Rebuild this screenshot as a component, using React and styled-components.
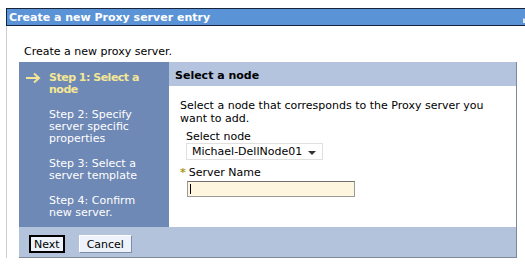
import styled, { createGlobalStyle } from 'styled-components';

const GlobalStyle = createGlobalStyle`
    body {
        margin: 0;
        background: #ffffff;
        font-family: "DejaVu Sans", Verdana, sans-serif;
        font-size: 11px;
        color: #000000;
        overflow: hidden;
    }
`;

const Window = styled.div`
    margin: 8px 0 0 6px;
    width: 540px;
`;

const TitleBar = styled.div`
    display: flex;
    align-items: center;
    justify-content: space-between;
    height: 16px;
    padding-left: 2px;
    background: #5a93d6;
    border: 1px solid #16233a;
    color: #ffffff;
    font-weight: bold;
    font-size: 11px;
`;

const Minimize = styled.span`
    width: 10px;
    height: 4px;
    margin: 6px 12px 0 0;
    background: #dfe9f6;
    border-top: 1px solid #9bb8de;
`;

const Body = styled.div`
    height: 232px;
    border-left: 1px solid #cfcfcf;
    padding: 19px 0 0 12px;
    box-sizing: border-box;
`;

const Intro = styled.p`
    margin: 0 0 4px 5px;
    line-height: 13px;
`;

const Wizard = styled.div`
    width: 498px;
    border-right: 1px solid #7d8899;
    border-bottom: 1px solid #7d8899;
    box-sizing: border-box;
`;

const Row = styled.div`
    display: flex;
`;

const Nav = styled.ul`
    width: 150px;
    margin: 0;
    padding: 10px 0 8px;
    list-style: none;
    background: #6f89b6;
    display: flex;
    flex-direction: column;
    gap: 13px;
`;

const Step = styled.li`
    display: grid;
    grid-template-columns: 30px 1fr;
    line-height: 12px;
    color: ${({ $active }) => ($active ? '#f3e795' : '#ffffff')};
    font-weight: ${({ $active }) => ($active ? 'bold' : 'normal')};
    letter-spacing: ${({ $active }) => ($active ? '-0.5px' : '0')};
`;

const ArrowIcon = () => (
    <svg width="16" height="12" viewBox="0 0 16 12" style={{ marginLeft: 6 }}>
        <path d="M1 6 H14 M9 1.5 L14 6 L9 10.5" fill="none" stroke="#f3e795" strokeWidth="2" />
    </svg>
);

const Content = styled.div`
    flex: 1;
    background: #ffffff;
`;

const Header = styled.h2`
    margin: 0;
    height: 24px;
    line-height: 28px;
    padding-left: 6px;
    font-size: 11px;
    background: #b5c4de;
`;

const Form = styled.div`
    padding: 13px 0 0 11px;
`;

const Description = styled.p`
    margin: 0 0 6px;
    width: 320px;
    line-height: 13px;
`;

const Field = styled.div`
    margin: 0 0 ${({ $required }) => ($required ? '0' : '7px')} ${({ $required }) => ($required ? '0' : '6px')};
`;

const Label = styled.div`
    line-height: 12px;
`;

const Required = styled.span`
    color: #a99a1e;
    font-weight: bold;
    margin-right: 3px;
`;

const SelectBox = styled.div`
    display: flex;
    align-items: center;
    justify-content: space-between;
    width: 137px;
    height: 17px;
    box-sizing: border-box;
    padding: 0 6px 0 5px;
    border: 1px solid #e0e0e0;
`;

const Caret = styled.span`
    width: 0;
    height: 0;
    border-left: 4px solid transparent;
    border-right: 4px solid transparent;
    border-top: 4px solid #333333;
    margin-top: 2px;
`;

const Input = styled.div`
    width: 168px;
    height: 16px;
    margin: 2px 0 0 7px;
    box-sizing: border-box;
    background: #fff6df;
    border: 1px solid #9a9a9a;
    border-top-color: #707070;
    padding: 2px 0 0 2px;
`;

const Cursor = styled.span`
    display: block;
    width: 1px;
    height: 10px;
    background: #000000;
`;

const ButtonBar = styled.div`
    display: flex;
    gap: 14px;
    height: 30px;
    padding: 8px 0 0 10px;
    box-sizing: border-box;
    background: #b4c3dc;
`;

const Button = styled.button`
    height: 18px;
    padding: 0 ${({ $primary }) => ($primary ? '3px' : '7px')};
    font-family: "DejaVu Sans", Verdana, sans-serif;
    font-size: 11px;
    color: #000000;
    background: #eef2fa;
    border: ${({ $primary }) => ($primary ? '2px solid #000000' : '1px solid #ffffff')};
    border-right-color: ${({ $primary }) => ($primary ? '#000000' : '#7e8ca6')};
    border-bottom-color: ${({ $primary }) => ($primary ? '#000000' : '#7e8ca6')};
`;

const steps = [
    ['Step 1: Select a', 'node'],
    ['Step 2: Specify', 'server specific', 'properties'],
    ['Step 3: Select a', 'server template'],
    ['Step 4: Confirm', 'new server.'],
];

export default function App() {
    return (
        <>
            <GlobalStyle />
            <Window>
                <TitleBar>
                    Create a new Proxy server entry
                    <Minimize />
                </TitleBar>
                <Body>
                    <Intro>Create a new proxy server.</Intro>
                    <Wizard>
                        <Row>
                            <Nav>
                                {steps.map((lines, i) => (
                                    <Step key={lines[0]} $active={i === 0}>
                                        <span>{i === 0 && <ArrowIcon />}</span>
                                        <span>
                                            {lines.map((line) => (
                                                <div key={line}>{line}</div>
                                            ))}
                                        </span>
                                    </Step>
                                ))}
                            </Nav>
                            <Content>
                                <Header>Select a node</Header>
                                <Form>
                                    <Description>
                                        Select a node that corresponds to the Proxy server you want to add.
                                    </Description>
                                    <Field>
                                        <Label>Select node</Label>
                                        <SelectBox>
                                            Michael-DellNode01
                                            <Caret />
                                        </SelectBox>
                                    </Field>
                                    <Field $required>
                                        <Label>
                                            <Required>*</Required>Server Name
                                        </Label>
                                        <Input>
                                            <Cursor />
                                        </Input>
                                    </Field>
                                </Form>
                            </Content>
                        </Row>
                        <ButtonBar>
                            <Button $primary>Next</Button>
                            <Button>Cancel</Button>
                        </ButtonBar>
                    </Wizard>
                </Body>
            </Window>
        </>
    );
}
